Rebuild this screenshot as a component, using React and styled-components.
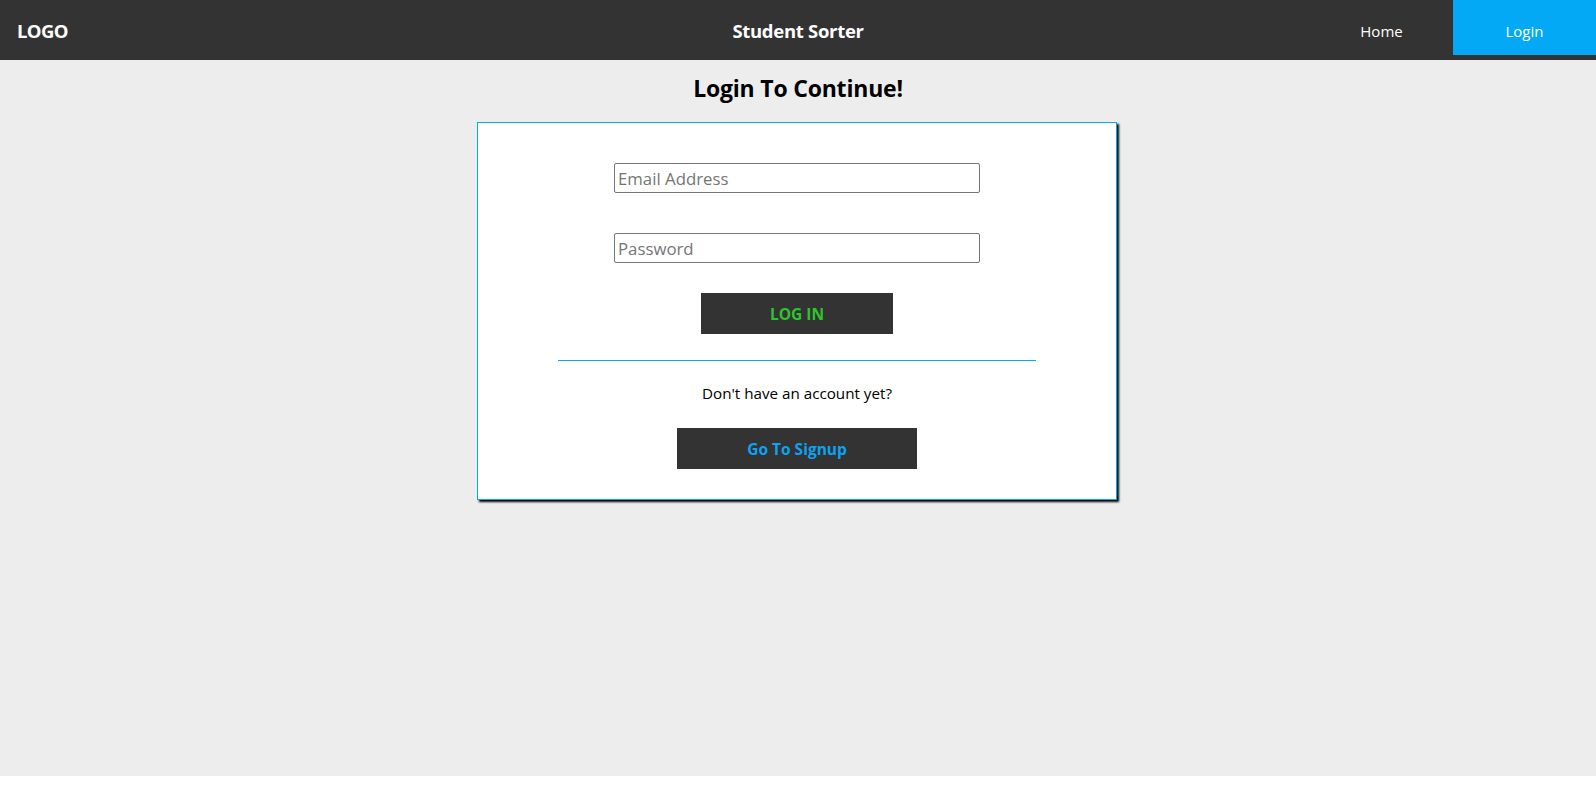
import React from "react";
import styled, { createGlobalStyle } from "styled-components";

const Global = createGlobalStyle`
  html, body { margin: 0; padding: 0; background: #fff; }
  body { font-family: "Open Sans", "Noto Sans", sans-serif; }
  * { box-sizing: border-box; }
`;

const Page = styled.div`
  height: 776px;
  background: #ededed;
  display: flex;
  flex-direction: column;
`;

const Nav = styled.nav`
  height: 60px;
  background: #333333;
  display: flex;
  align-items: flex-start;
  position: relative;
`;

const Logo = styled.div`
  color: #fff;
  font-weight: 700;
  font-size: 18.5px;
  line-height: 62px;
  padding-left: 17px;
  letter-spacing: -0.6px;
`;

const Title = styled.div`
  position: absolute;
  left: 50%;
  transform: translateX(-50%);
  color: #fff;
  font-weight: 700;
  font-size: 18.5px;
  line-height: 62px;
  letter-spacing: -0.3px;
`;

const Links = styled.div`
  margin-left: auto;
  display: flex;
  align-items: flex-start;
`;

const NavLink = styled.a`
  width: 143px;
  height: ${(p) => (p.$active ? "55px" : "60px")};
  line-height: 62px;
  background: ${(p) => (p.$active ? "#03a9f4" : "transparent")};
  color: #fff;
  font-size: 15px;
  text-align: center;
  text-decoration: none;
  cursor: pointer;
`;

const Heading = styled.h1`
  margin: 13px 0 0;
  text-align: center;
  font-size: 23px;
  font-weight: 700;
  line-height: 30px;
  color: #000;
  letter-spacing: -0.2px;
`;

const Card = styled.div`
  align-self: center;
  width: 640px;
  margin-top: 19px;
  margin-left: -2px;
  background: #fff;
  border: 1px solid #03a9f4;
  box-shadow: 2px 2px 2px #000;
  display: flex;
  flex-direction: column;
  align-items: center;
  padding: 40px 0 30px;
`;

const Input = styled.input`
  width: 366px;
  height: 30px;
  border: 1px solid #767676;
  border-radius: 2px;
  font-family: "Open Sans", "Noto Sans", sans-serif;
  font-size: 16.8px;
  padding: 0 3px;
  color: #000;
  margin-bottom: ${(p) => p.$mb}px;
  &::placeholder { color: #757575; }
  outline: none;
`;

const Button = styled.button`
  width: ${(p) => p.$w}px;
  height: 41px;
  background: #333333;
  border: none;
  color: ${(p) => p.$color};
  font-family: "Open Sans", "Noto Sans", sans-serif;
  font-weight: 700;
  font-size: 15.5px;
  cursor: pointer;
`;

const Divider = styled.hr`
  width: 478px;
  border: none;
  height: 1px;
  background: #03a9f4;
  margin: 26px 0 0;
`;

const Prompt = styled.p`
  margin: 20px 0 0;
  font-size: 15.2px;
  line-height: 24px;
  color: #000;
`;

const SignupWrap = styled.div`
  margin-top: 23px;
`;

export default function App() {
  return (
    <>
      <Global />
      <Page>
        <Nav>
          <Logo>LOGO</Logo>
          <Title>Student Sorter</Title>
          <Links>
            <NavLink>Home</NavLink>
            <NavLink $active>Login</NavLink>
          </Links>
        </Nav>
        <Heading>Login To Continue!</Heading>
        <Card>
          <Input type="email" placeholder="Email Address" $mb={40} />
          <Input type="password" placeholder="Password" $mb={30} />
          <Button $w={192} $color="#2fc42f">LOG IN</Button>
          <Divider />
          <Prompt>Don't have an account yet?</Prompt>
          <SignupWrap>
            <Button $w={240} $color="#0ea2f2">Go To Signup</Button>
          </SignupWrap>
        </Card>
      </Page>
    </>
  );
}
